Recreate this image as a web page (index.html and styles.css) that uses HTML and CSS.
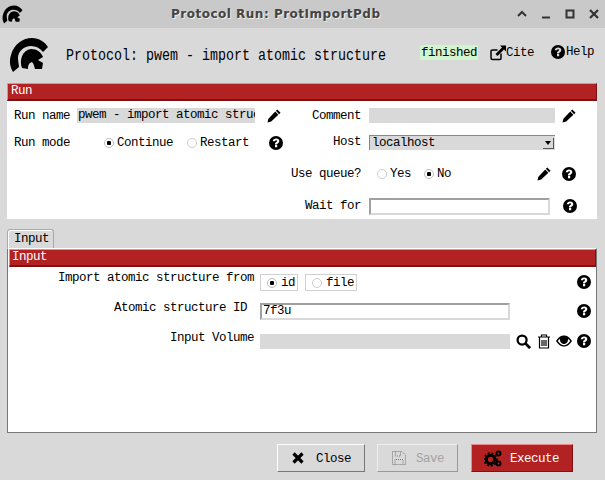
FILE: index.html
```html
<!DOCTYPE html>
<html lang="en">
<head>
    <meta charset="UTF-8">
    <title>Protocol Run: ProtImportPdb</title>
    <link rel="stylesheet" href="styles.css">
</head>
<body>
    <svg class="defs" width="0" height="0">
        <defs>
            <symbol id="logo" viewBox="0 0 40 36">
                <path d="M4 35 C1 30 0 24 2 18 C5 7 14 1 23 1 C30 1 36 5 39 10 L34 15 C31 11 27 9 22 9 C15 9 9 14 9 21 C9 25 10 28 10 30 Z"/>
                <path d="M13 31 C10 24 13 13 22 12 C28 12 32 15 34 20 L29 23 L34 26 L33 32 L26 32 C25 29 25 27 23 25 C20 26 19 28 19 32 Z"/>
            </symbol>
            <symbol id="help" viewBox="0 0 14 14">
                <path fill-rule="evenodd" d="M7 0a7 7 0 1 0 0 14A7 7 0 0 0 7 0zM6 9h2.200v2.200H6zM3.800 5.200C4 3.300 5.300 2.500 7.100 2.500c1.900 0 3.200 1 3.200 2.600 0 1.200-.7 1.800-1.500 2.300-.6.400-.8.600-.8 1H6c0-1.200.4-1.800 1.200-2.300.6-.4 1-.6 1-1.100 0-.5-.4-.8-1.100-.8-.7 0-1.100.4-1.200 1z"/>
            </symbol>
            <symbol id="pencil" viewBox="0 0 15 15">
                <path d="M11 0.500 L14.500 4 L13 5.500 L9.500 2 Z M8.800 2.800 L12.200 6.200 L4.500 13.500 L0.500 14.500 L1.500 10.500 Z"/>
            </symbol>
        </defs>
    </svg>

    <div class="titlebar">
        <svg class="title-logo"><use href="#logo"/></svg>
        <span class="title-text">Protocol Run: ProtImportPdb</span>
        <div class="win-btns">
            <svg viewBox="0 0 10 10"><path d="M1 7 L5 3 L9 7" fill="none" stroke="#333" stroke-width="2"/></svg>
            <svg viewBox="0 0 10 10"><path d="M1 8.500 H9" fill="none" stroke="#333" stroke-width="2"/></svg>
            <svg viewBox="0 0 10 10"><rect x="1.500" y="1.500" width="7" height="7" fill="none" stroke="#333" stroke-width="2"/></svg>
            <svg viewBox="0 0 10 10"><path d="M1 1 L9 9 M9 1 L1 9" fill="none" stroke="#333" stroke-width="2.200"/></svg>
        </div>
    </div>

    <div class="window">
        <div class="header">
            <svg class="logo"><use href="#logo"/></svg>
            <span class="protocol-title">Protocol: pwem - import atomic structure</span>
            <span class="status">finished</span>
            <a class="head-link">
                <svg class="icon-cite" viewBox="0 0 16 16"><path d="M11 8.500 V13.500 Q11 14.500 10 14.500 H2.500 Q1 14.500 1 13 V6 Q1 5 2.500 5 H7.500" fill="none" stroke="#000" stroke-width="1.500"/><path d="M10 0.500 H16 V6.500 L14 4.500 L7.500 11 L5.500 9 L12 2.500 Z"/></svg>Cite
            </a>
            <a class="head-link link-help">
                <svg class="icon"><use href="#help"/></svg>Help
            </a>
        </div>

        <section class="panel run-panel">
            <div class="panel-title">Run</div>
            <div class="run-body">
                <div class="run-left">
                    <div class="row row-name">
                        <label class="left-label">Run name</label>
                        <div class="entry entry-name">pwem - import atomic struc</div>
                        <svg class="icon pencil-name"><use href="#pencil"/></svg>
                    </div>
                    <div class="row row-mode">
                        <label class="left-label">Run mode</label>
                        <span class="radio radio-continue checked">Continue</span>
                        <span class="radio radio-restart">Restart</span>
                        <svg class="icon help-mode"><use href="#help"/></svg>
                    </div>
                </div>
                <div class="run-right">
                    <div class="row row-comment">
                        <label class="right-label">Comment</label>
                        <div class="entry entry-comment"></div>
                        <svg class="icon pencil-comment"><use href="#pencil"/></svg>
                    </div>
                    <div class="row row-host">
                        <label class="right-label">Host</label>
                        <div class="select">
                            <span>localhost</span>
                            <span class="select-btn"></span>
                        </div>
                    </div>
                    <div class="row row-queue">
                        <label class="right-label">Use queue?</label>
                        <span class="radio radio-yes">Yes</span>
                        <span class="radio radio-no checked">No</span>
                        <svg class="icon pencil-queue"><use href="#pencil"/></svg>
                        <svg class="icon help-queue"><use href="#help"/></svg>
                    </div>
                    <div class="row row-wait">
                        <label class="right-label">Wait for</label>
                        <div class="field field-wait"></div>
                        <svg class="icon help-wait"><use href="#help"/></svg>
                    </div>
                </div>
            </div>
        </section>

        <div class="tabs"><span class="tab">Input</span></div>

        <section class="panel input-panel">
            <div class="panel-title">Input</div>
            <div class="input-body">
                <div class="param param-source">
                    <label class="param-label">Import atomic structure from</label>
                    <span class="boxed radio checked">id</span>
                    <span class="boxed radio">file</span>
                    <svg class="icon help-end"><use href="#help"/></svg>
                </div>
                <div class="param param-id">
                    <label class="param-label">Atomic structure ID</label>
                    <div class="field field-id">7f3u</div>
                    <svg class="icon help-end"><use href="#help"/></svg>
                </div>
                <div class="param param-volume">
                    <label class="param-label">Input Volume</label>
                    <div class="entry entry-volume"></div>
                    <svg class="icon icon-search" viewBox="0 0 16 16"><circle cx="6.500" cy="6.500" r="4.800" fill="none" stroke="#000" stroke-width="2.400"/><path d="M10 10 L15 15" stroke="#000" stroke-width="3"/></svg>
                    <svg class="icon icon-trash" viewBox="0 0 14 15"><path d="M1 3 H13 M4.500 3 V1 H9.500 V3 M2.500 3 V14 H11.500 V3 M5 6 V12 M7 6 V12 M9 6 V12" fill="none" stroke="#000" stroke-width="1.200"/></svg>
                    <svg class="icon icon-eye" viewBox="0 0 16 12"><path fill-rule="evenodd" d="M0 6 C3 1.500 5.500 0.500 8 0.500 C10.500 0.500 13 1.500 16 6 C13 10.500 10.500 11.500 8 11.500 C5.500 11.500 3 10.500 0 6 Z M1.800 6 C4 9 6 10.200 8 10.200 C10 10.200 12 9 14.200 6 C13.500 5 12.800 4.300 12 3.700 C12.300 6.500 10.500 9 8 9 C5.500 9 3.700 6.500 4 3.700 C3.200 4.300 2.500 5 1.800 6 Z"/></svg>
                    <svg class="icon icon-help"><use href="#help"/></svg>
                </div>
            </div>
        </section>

        <div class="actions">
            <button class="btn btn-close">
                <svg class="btn-icon" viewBox="0 0 12 12"><path d="M1.500 1.500 L10.500 10.500 M10.500 1.500 L1.500 10.500" stroke="#000" stroke-width="3.200"/></svg>Close
            </button>
            <button class="btn btn-save">
                <svg class="btn-icon" viewBox="0 0 14 14"><path d="M0.500 0.500 H10 L13.500 4 V13.500 H0.500 Z M3.500 0.500 V5 H8.500 V0.500 M3 13.500 V8.500 H11 V13.500" fill="none" stroke="#777" stroke-dasharray="1 1"/></svg>Save
            </button>
            <button class="btn btn-execute">
                <svg class="btn-icon gears" viewBox="0 0 18 17"><circle cx="6.500" cy="9.500" r="4.200" fill="none" stroke="#000" stroke-width="3"/><circle cx="6.500" cy="9.500" r="6.400" fill="none" stroke="#000" stroke-width="1.600" stroke-dasharray="2 1.800"/><circle cx="14.500" cy="3.500" r="2" fill="none" stroke="#000" stroke-width="2"/><circle cx="14.500" cy="13.500" r="2" fill="none" stroke="#000" stroke-width="2"/></svg>Execute
            </button>
        </div>
    </div>
</body>
</html>
```

FILE: styles.css
```css
html, body {
    margin: 0;
    padding: 0;
}

body {
    width: 605px;
    height: 480px;
    overflow: hidden;
    background-color: #d9d9d9;
    font-family: "Liberation Mono", monospace;
    font-size: 12.5px;
    letter-spacing: -0.5px;
    color: #000;
}

.defs {
    position: absolute;
}

.titlebar {
    display: flex;
    align-items: center;
    height: 28px;
    background-color: #c9c9c9;
    position: relative;
}

.title-logo {
    width: 21px;
    height: 19px;
    margin-left: 2px;
}

.title-text {
    position: absolute;
    left: 171px;
    top: 7px;
    font-family: "DejaVu Sans", sans-serif;
    font-weight: bold;
    font-size: 12px;
    letter-spacing: 0.5px;
    color: #444;
    text-shadow: 1px 1px 0 #eee;
}

.win-btns {
    display: flex;
    gap: 14px;
    margin-left: auto;
    margin-right: 6px;
}

.win-btns svg {
    width: 10px;
    height: 10px;
}

.window {
    padding: 0 8px 0 7px;
}

.header {
    display: flex;
    align-items: flex-start;
    height: 55px;
}

.logo {
    width: 40px;
    height: 36px;
    margin: 9px 0 0 2px;
}

.protocol-title {
    font-size: 13.33px;
    letter-spacing: 0;
    margin: 20px 0 0 17px;
    width: 320px;
    white-space: nowrap;
    transform: scaleY(1.3);
}

.status {
    background-color: #d0f5cf;
    margin: 17px 0 0 34px;
    padding: 2px 1px 0;
    height: 13px;
    line-height: 13px;
}

.head-link {
    display: flex;
    align-items: center;
    margin: 17px 0 0 12px;
}

.link-help {
    margin-left: 16px;
}

.link-help .icon {
    margin: 0 1px 0 1px;
}

.icon-cite {
    width: 16px;
    height: 16px;
}

.icon {
    width: 14px;
    height: 14px;
    flex: none;
}

.panel {
    background-color: #fff;
}

.panel-title {
    height: 15px;
    line-height: 15px;
    background-color: #b22222;
    color: #fff;
    padding-left: 3px;
    border-top: 1px solid #f08a8a;
    border-left: 1px solid #f08a8a;
    border-right: 1px solid #7d1212;
    border-bottom: 2px solid #7d1212;
}

.run-panel {
    height: 136px;
    width: 590px;
}

.run-body {
    display: flex;
}

.run-left {
    width: 283px;
    padding: 7px 0 0 7px;
    box-sizing: border-box;
}

.run-right {
    padding-top: 7px;
}

.row {
    display: flex;
    align-items: center;
    height: 16px;
}

.row-name,
.row-comment {
    height: 15px;
    margin-bottom: 12px;
}

.left-label {
    width: 63px;
    flex: none;
}

.entry {
    background-color: #d9d9d9;
    height: 15px;
    line-height: 15px;
    white-space: nowrap;
    overflow: hidden;
}

.entry-name {
    width: 178px;
    padding-left: 1px;
    box-sizing: border-box;
}

.pencil-name {
    margin-left: 12px;
}

.radio {
    display: inline-flex;
    align-items: center;
}

.radio::before {
    content: "";
    display: inline-block;
    box-sizing: border-box;
    width: 10px;
    height: 10px;
    border-radius: 50%;
    border: 1px solid #ccc;
    background-color: #fff;
    margin-right: 3px;
}

.radio.checked::before {
    background: radial-gradient(circle, #000 0, #000 2px, #fff 2.500px);
    border-color: #bbb;
}

.radio-continue {
    margin-left: 27px;
}

.radio-restart {
    margin-left: 14px;
}

.help-mode {
    margin-left: 20px;
}

.row-host {
    align-items: flex-start;
    margin-bottom: 15px;
}

.row-queue {
    margin-bottom: 16px;
}

.right-label {
    width: 71px;
    margin-right: 8px;
    text-align: right;
    flex: none;
}

.entry-comment {
    width: 186px;
}

.pencil-comment {
    margin-left: 7px;
}

.select {
    display: flex;
    align-items: center;
    justify-content: space-between;
    box-sizing: border-box;
    width: 186px;
    height: 15px;
    background-color: #d9d9d9;
    border-top: 1px solid #888;
    border-left: 1px solid #888;
    padding: 0 1px 0 2px;
}

.select-btn {
    position: relative;
    width: 11px;
    height: 11px;
    background-color: #d9d9d9;
    border-right: 1px solid #555;
    border-bottom: 1px solid #555;
    box-sizing: border-box;
}

.select-btn::after {
    content: "";
    position: absolute;
    left: 2px;
    top: 3px;
    border-left: 3px solid transparent;
    border-right: 3px solid transparent;
    border-top: 4px solid #000;
}

.radio-yes {
    margin-left: 8px;
}

.radio-no {
    margin-left: 13px;
}

.pencil-queue {
    margin-left: 86px;
}

.help-queue {
    margin-left: 11px;
}

.field {
    box-sizing: border-box;
    background-color: #fff;
    border: 2px solid #d9d9d9;
    border-top-color: #a0a0a0;
    border-left-color: #a0a0a0;
    height: 17px;
    line-height: 13px;
    padding-left: 1px;
}

.field-wait {
    width: 181px;
}

.help-wait {
    margin-left: 13px;
}

.tabs {
    display: flex;
    height: 29px;
    align-items: flex-end;
}

.tab {
    box-sizing: border-box;
    height: 19px;
    line-height: 19px;
    width: 47px;
    padding-left: 6px;
    background-color: #d9d9d9;
    border: 1px solid #aaa;
    border-bottom: 0;
    border-radius: 3px 3px 0 0;
    box-shadow: inset 1px 1px 0 #fff;
}

.input-panel {
    box-sizing: border-box;
    width: 590px;
    height: 185px;
    border: 1px solid #777;
    border-top: 1px solid #fff;
}

.input-panel .panel-title {
    margin-left: 1px;
    padding-left: 2px;
}

.input-body {
    padding-top: 6px;
}

.param {
    display: flex;
    align-items: flex-start;
    height: 30px;
    padding-right: 5px;
}

.param-label {
    width: 246px;
    margin: -2px 6px 0 0;
    text-align: right;
    white-space: nowrap;
    flex: none;
}

.param-id .param-label {
    width: 239px;
    margin: -2px 13px 0 0;
}

.boxed {
    box-sizing: border-box;
    height: 17px;
    margin: 1px 7px 0 0;
    border: 1px solid #d0d0d0;
    padding: 0 2px 0 6px;
}

.boxed::before {
    margin-right: 4px;
}

.help-end {
    margin-left: auto;
    margin-top: 2px;
}

.field-id {
    width: 250px;
}

.param-id .help-end {
    margin-top: 1px;
}

.entry-volume {
    width: 250px;
    margin-top: 1px;
}

.icon-search,
.icon-trash,
.icon-eye,
.icon-help {
    margin-top: 1px;
}

.icon-search {
    margin-left: 6px;
    width: 15px;
    height: 15px;
}

.icon-trash {
    margin-left: 6px;
    height: 15px;
}

.icon-eye {
    margin-left: 5px;
    width: 16px;
    margin-right: 5px;
}

.actions {
    display: flex;
    height: 47px;
    align-items: flex-start;
    padding: 11px 0 0 270px;
    box-sizing: border-box;
}

.btn {
    display: flex;
    align-items: center;
    box-sizing: border-box;
    height: 28px;
    background-color: #d9d9d9;
    font-family: inherit;
    font-size: inherit;
    letter-spacing: inherit;
    border: 1px solid #fff;
    border-right-color: #777;
    border-bottom-color: #777;
    padding: 1px 0 0 14px;
}

.btn-icon {
    width: 12px;
    height: 12px;
    margin-top: -1px;
}

.btn-close {
    width: 88px;
}

.btn-close .btn-icon {
    margin-right: 12px;
}

.btn-save {
    width: 81px;
    margin-left: 12px;
    color: #a3a3a3;
    border-color: #eee #999 #999 #eee;
}

.btn-save .btn-icon {
    width: 14px;
    height: 14px;
    margin-right: 10px;
}

.btn-execute {
    width: 102px;
    margin-left: 13px;
    background-color: #b22222;
    color: #fff;
    border-color: #e88 #7d1212 #7d1212 #e88;
    padding-left: 12px;
}

.gears {
    width: 18px;
    height: 17px;
    margin-right: 8px;
}
```
